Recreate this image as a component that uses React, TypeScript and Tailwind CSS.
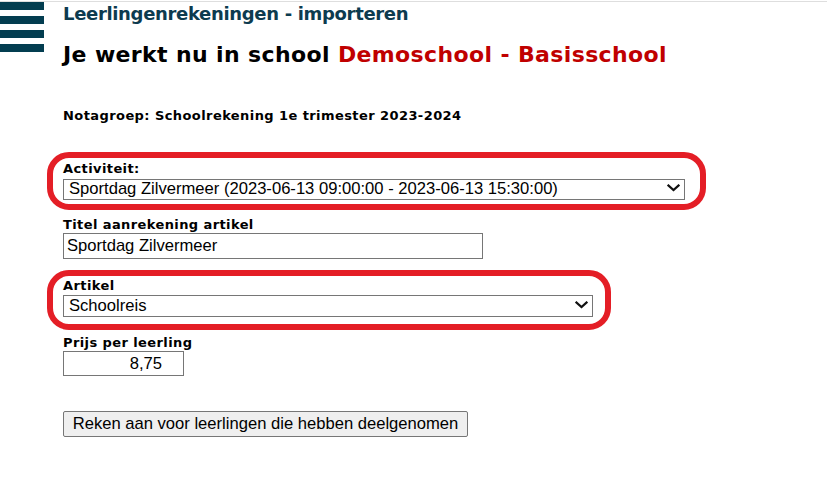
import React from 'react';

const labelFont = { fontFamily: '"DejaVu Sans", Verdana, sans-serif' };
const fieldFont = { fontFamily: '"Liberation Sans", Arial, sans-serif' };

const Chevron: React.FC = () => (
  <svg
    className="pointer-events-none absolute right-[5px] top-1/2 -translate-y-1/2"
    width="13"
    height="8"
    viewBox="0 0 13 8"
    fill="none"
  >
    <path d="M1.5 1.5 L6.5 6 L11.5 1.5" stroke="#111" strokeWidth="2.2" strokeLinecap="square" />
  </svg>
);

const SelectBox: React.FC<{ value: string; width: string; height: string }> = ({ value, width, height }) => (
  <div className={`relative ${width} ${height}`}>
    <select
      defaultValue={value}
      className="h-full w-full appearance-none border border-[#767676] bg-white pl-[5px] pr-6 text-[16.6px] leading-[18px] text-black outline-none"
      style={fieldFont}
    >
      <option value={value}>{value}</option>
    </select>
    <Chevron />
  </div>
);

export default function App() {
  return (
    <div className="min-h-screen bg-white">
      <div className="mt-px h-px bg-[#dedede]" />
      <div className="flex">
        {/* Menu */}
        <div className="flex w-[44px] shrink-0 flex-col gap-[6px]">
          <div className="h-[8px] bg-[#033d50]" />
          <div className="h-[8px] bg-[#033d50]" />
          <div className="h-[8px] bg-[#033d50]" />
          <div className="h-[8px] bg-[#033d50]" />
        </div>

        {/* Content */}
        <div className="pl-[19px]" style={labelFont}>
          <h2 className="mt-px text-[18px] font-bold leading-[22px] tracking-[-0.33px] text-[#0d3b4f]">
            Leerlingenrekeningen - importeren
          </h2>
          <h1 className="mt-[16px] text-[22px] font-bold leading-[28px] tracking-[0.37px] text-black">
            Je werkt nu in school <span className="text-[#c00000]">Demoschool - Basisschool</span>
          </h1>

          <p className="mt-[39px] text-[13px] font-bold leading-[16px] tracking-[0.42px] text-black">
            Notagroep: Schoolrekening 1e trimester 2023-2024
          </p>

          <div className="-ml-[16px] mt-[28px] w-[659px] rounded-[22px] border-[6px] border-[#e41e26] pb-[6px] pl-[10px] pt-[3px]">
            <label className="block text-[13px] font-bold leading-[16px] tracking-[0.4px] text-black">Activiteit:</label>
            <SelectBox
              value="Sportdag Zilvermeer (2023-06-13 09:00:00 - 2023-06-13 15:30:00)"
              width="w-[622px]"
              height="h-[21px]"
            />
          </div>

          <label className="mt-[7px] block text-[13px] font-bold leading-[16px] tracking-[0.4px] text-black">
            Titel aanrekening artikel
          </label>
          <input
            defaultValue="Sportdag Zilvermeer"
            className="block h-[26px] w-[420px] border border-[#767676] bg-white px-[3px] text-[16.6px] text-black outline-none"
            style={fieldFont}
          />

          <div className="-ml-[16px] mt-[11px] w-[564px] rounded-[22px] border-[6px] border-[#e41e26] pb-[8px] pl-[10px] pt-[2px]">
            <label className="block text-[13px] font-bold leading-[16px] tracking-[0.4px] text-black">Artikel</label>
            <SelectBox value="Schoolreis" width="w-[530px]" height="h-[22px]" />
          </div>

          <label className="mt-[5px] block text-[13px] font-bold leading-[16px] tracking-[0.4px] text-black">
            Prijs per leerling
          </label>
          <input
            defaultValue="8,75"
            className="block h-[25px] w-[121px] border border-[#767676] bg-white pr-[21px] text-right text-[16.6px] text-black outline-none"
            style={fieldFont}
          />

          <button
            className="mt-[35px] block h-[26px] w-[405px] rounded-[2px] border border-[#767676] bg-[#efefef] text-center text-[16.6px] leading-[18px] text-black"
            style={fieldFont}
          >
            Reken aan voor leerlingen die hebben deelgenomen
          </button>
        </div>
      </div>
    </div>
  );
}
